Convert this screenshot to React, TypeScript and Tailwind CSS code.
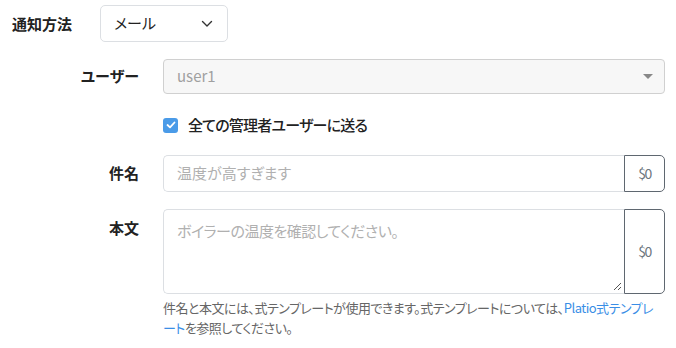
import React from "react";

const font = { fontFamily: '"Noto Sans CJK JP", "Noto Sans", sans-serif' };

export default function App() {
  return (
    <div className="w-[676px] h-[348px] bg-white text-[#222] [font-feature-settings:'palt']" style={font}>
      <div className="flex items-center pt-[5px] pl-[12px]">
        <div className="w-[88px] text-[15px] font-bold leading-none">通知方法</div>
        <div className="w-[128px] h-[37px] border border-[#dcdfe3] rounded-[5px] flex items-center justify-between pl-[13px] pr-[14px]">
          <span className="text-[15px] text-[#222]">メール</span>
          <svg width="12" height="8" viewBox="0 0 12 8" fill="none">
            <path d="M1.5 1.5 L6 6 L10.5 1.5" stroke="#333" strokeWidth="1.4" strokeLinecap="round" strokeLinejoin="round" />
          </svg>
        </div>
      </div>

      <div className="flex flex-col pr-[11px]">
        <div className="flex items-center mt-[17px]">
          <div className="w-[139px] text-right text-[15px] font-bold">ユーザー</div>
          <div className="ml-[24px] flex-1 h-[35px] bg-[#f7f7f7] border border-[#d0d0d0] rounded-[4px] flex items-center justify-between pl-[13px] pr-[11px]">
            <span className="text-[15px] text-[#a0a0a0]">user1</span>
            <svg width="10" height="6" viewBox="0 0 10 6">
              <path d="M0 0 L10 0 L5 5 Z" fill="#888" />
            </svg>
          </div>
        </div>

        <div className="flex items-center mt-[20px] ml-[163px]">
          <span className="w-[15px] h-[15px] rounded-[3px] bg-[#4a9be8] flex items-center justify-center">
            <svg width="10" height="8" viewBox="0 0 10 8" fill="none">
              <path d="M1.5 4 L4 6.3 L8.5 1.5" stroke="white" strokeWidth="1.8" strokeLinecap="round" strokeLinejoin="round" />
            </svg>
          </span>
          <span className="ml-[10px] text-[15px] font-medium text-[#222] tracking-[-0.8px]">全ての管理者ユーザーに送る</span>
        </div>

        <div className="flex items-center mt-[18px]">
          <div className="w-[139px] text-right text-[15px] font-bold">件名</div>
          <div className="ml-[24px] flex-1 flex h-[37px]">
            <div className="flex-1 border border-[#dcdfe3] border-r-0 rounded-l-[5px] flex items-center pl-[13px]">
              <span className="text-[15px] text-[#b0b0b0]">温度が高すぎます</span>
            </div>
            <div className="w-[41px] border border-[#5f6770] rounded-r-[5px] flex items-center justify-center text-[14px] text-[#6c757d] tracking-[-1.5px]">$0</div>
          </div>
        </div>

        <div className="flex items-start mt-[17px]">
          <div className="w-[139px] text-right text-[15px] font-bold pt-[8px]">本文</div>
          <div className="ml-[24px] flex-1 flex flex-col">
            <div className="flex h-[85px]">
              <div className="relative flex-1 border border-[#dcdfe3] border-r-0 rounded-l-[5px] pl-[13px] pt-[8px]">
                <span className="text-[15px] text-[#b0b0b0] tracking-[-0.5px]">ボイラーの温度を確認してください。</span>
                <svg className="absolute right-[2px] bottom-[2px]" width="9" height="9" viewBox="0 0 9 9">
                  <path d="M8 1 L1 8 M8 5 L5 8" stroke="#555" strokeWidth="1" />
                </svg>
              </div>
              <div className="w-[41px] border border-[#5f6770] rounded-r-[5px] flex items-center justify-center text-[14px] text-[#6c757d] tracking-[-1.5px]">$0</div>
            </div>
            <p className="mt-[4px] text-[13px] leading-[20px] text-[#666] pr-[4px] tracking-[-0.5px]">
              件名と本文には、式テンプレートが使用できます。式テンプレートについては、<span className="text-[#3a8ee6]">Platio式テンプレ<br />ート</span>を参照してください。
            </p>
          </div>
        </div>
      </div>
    </div>
  );
}
